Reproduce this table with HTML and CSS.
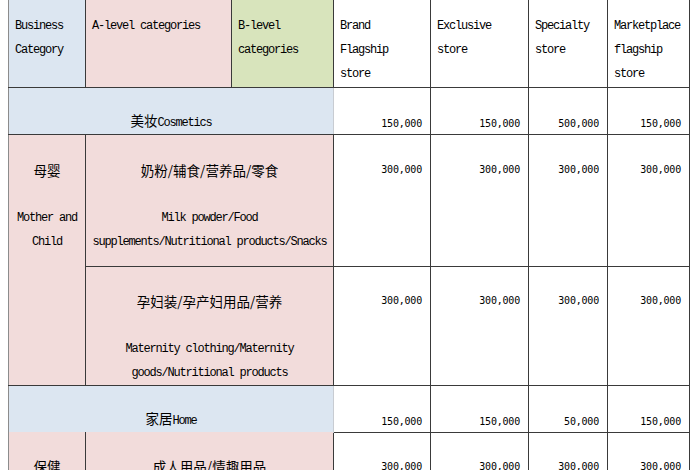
FILE: index.html
```html
<!DOCTYPE html>
<html lang="zh">
<head>
<meta charset="utf-8">
<title>Category fees</title>
<link rel="stylesheet" href="styles.css">
</head>
<body>
<table class="sheet">
  <colgroup>
    <col class="w-biz"><col class="w-a"><col class="w-b"><col class="w-brand"><col class="w-excl"><col class="w-spec"><col class="w-mkt">
  </colgroup>
  <tr class="r-head">
    <td class="head first blue">Business<br>Category</td>
    <td class="head pink">A-level categories</td>
    <td class="head green">B-level<br>categories</td>
    <td class="head">Brand<br>Flagship<br>store</td>
    <td class="head">Exclusive<br>store</td>
    <td class="head">Specialty<br>store</td>
    <td class="head">Marketplace<br>flagship<br>store</td>
  </tr>
  <tr class="r-group r-cos">
    <td class="group first blue" colspan="3"><span class="cn">美妆</span>Cosmetics</td>
    <td class="num">150,000</td>
    <td class="num">150,000</td>
    <td class="num">500,000</td>
    <td class="num">150,000</td>
  </tr>
  <tr class="r-mc1">
    <td class="item first pink" rowspan="2">
      <div class="cn">母婴</div>
      <div class="gap"></div>
      <div>Mother and</div>
      <div>Child</div>
    </td>
    <td class="item pink" colspan="2">
      <div class="cn">奶粉/辅食/营养品/零食</div>
      <div class="gap"></div>
      <div>Milk powder/Food</div>
      <div>supplements/Nutritional products/Snacks</div>
    </td>
    <td class="num">300,000</td>
    <td class="num">300,000</td>
    <td class="num">300,000</td>
    <td class="num">300,000</td>
  </tr>
  <tr class="r-mc2">
    <td class="item pink" colspan="2">
      <div class="cn">孕妇装/孕产妇用品/营养</div>
      <div class="gap"></div>
      <div>Maternity clothing/Maternity</div>
      <div>goods/Nutritional products</div>
    </td>
    <td class="num">300,000</td>
    <td class="num">300,000</td>
    <td class="num">300,000</td>
    <td class="num">300,000</td>
  </tr>
  <tr class="r-group r-home">
    <td class="group first blue open-bottom" colspan="3"><span class="cn">家居</span>Home</td>
    <td class="num">150,000</td>
    <td class="num">150,000</td>
    <td class="num">50,000</td>
    <td class="num">150,000</td>
  </tr>
  <tr class="r-health">
    <td class="item first pink"><div class="cn">保健</div></td>
    <td class="item pink" colspan="2"><div class="cn">成人用品/情趣用品</div></td>
    <td class="num">300,000</td>
    <td class="num">300,000</td>
    <td class="num">300,000</td>
    <td class="num">300,000</td>
  </tr>
</table>
</body>
</html>
```

FILE: styles.css
```css
html, body {
  margin: 0;
  padding: 0;
  background: #ffffff;
  overflow: hidden;
}

.sheet {
  border-collapse: collapse;
  table-layout: fixed;
  width: 682px;
  margin-left: 8px;
  font-family: "Liberation Mono", "Noto Sans CJK SC", monospace;
  font-size: 12px;
  letter-spacing: -1.2px;
  color: #000000;
}

.w-biz { width: 77px; }
.w-a { width: 146px; }
.w-b { width: 102px; }
.w-brand { width: 97px; }
.w-excl { width: 98px; }
.w-spec { width: 79px; }
.w-mkt { width: 82px; }

.sheet td {
  border: 1px solid #3a3a3a;
  padding: 0;
  vertical-align: top;
  white-space: nowrap;
  overflow: hidden;
}

.sheet td.first {
  border-left-color: #8c8c8c;
}

.r-head td {
  border-top: none;
}

.blue { background: #dce6f1; }
.pink { background: #f2dcdb; }
.green { background: #d8e4bc; }

.cn {
  font-family: "Noto Sans CJK SC", sans-serif;
  font-size: 13.5px;
  letter-spacing: 0;
}

/* header row */
.r-head { height: 87px; }
.head {
  padding: 14px 6px 0 !important;
  line-height: 24px;
  text-align: left;
}

/* group rows (Cosmetics / Home) */
.r-cos, .r-home { height: 47px; }
.r-group td {
  vertical-align: bottom;
  line-height: 21px;
}
.group {
  text-align: center;
  border-right-color: #c8ccd2 !important;
}
.open-bottom {
  border-bottom-style: hidden !important;
}

/* item rows */
.r-mc1 { height: 132px; }
.r-mc2 { height: 119px; }
.r-health { height: 110px; }

.item {
  text-align: center;
  line-height: 24px;
  padding-top: 23px !important;
}
.r-mc2 .item, .r-health .item {
  padding-top: 22px !important;
}
.gap { height: 24px; }

/* values */
.num {
  text-align: right;
  padding-right: 8px !important;
  font-family: "DejaVu Sans Mono", monospace;
  font-size: 10px;
  letter-spacing: -0.2px;
  line-height: 24px;
}
.r-group .num { line-height: 21px; }
.r-mc1 .num { padding-top: 23px !important; }
.r-mc2 .num, .r-health .num { padding-top: 22px !important; }
```
